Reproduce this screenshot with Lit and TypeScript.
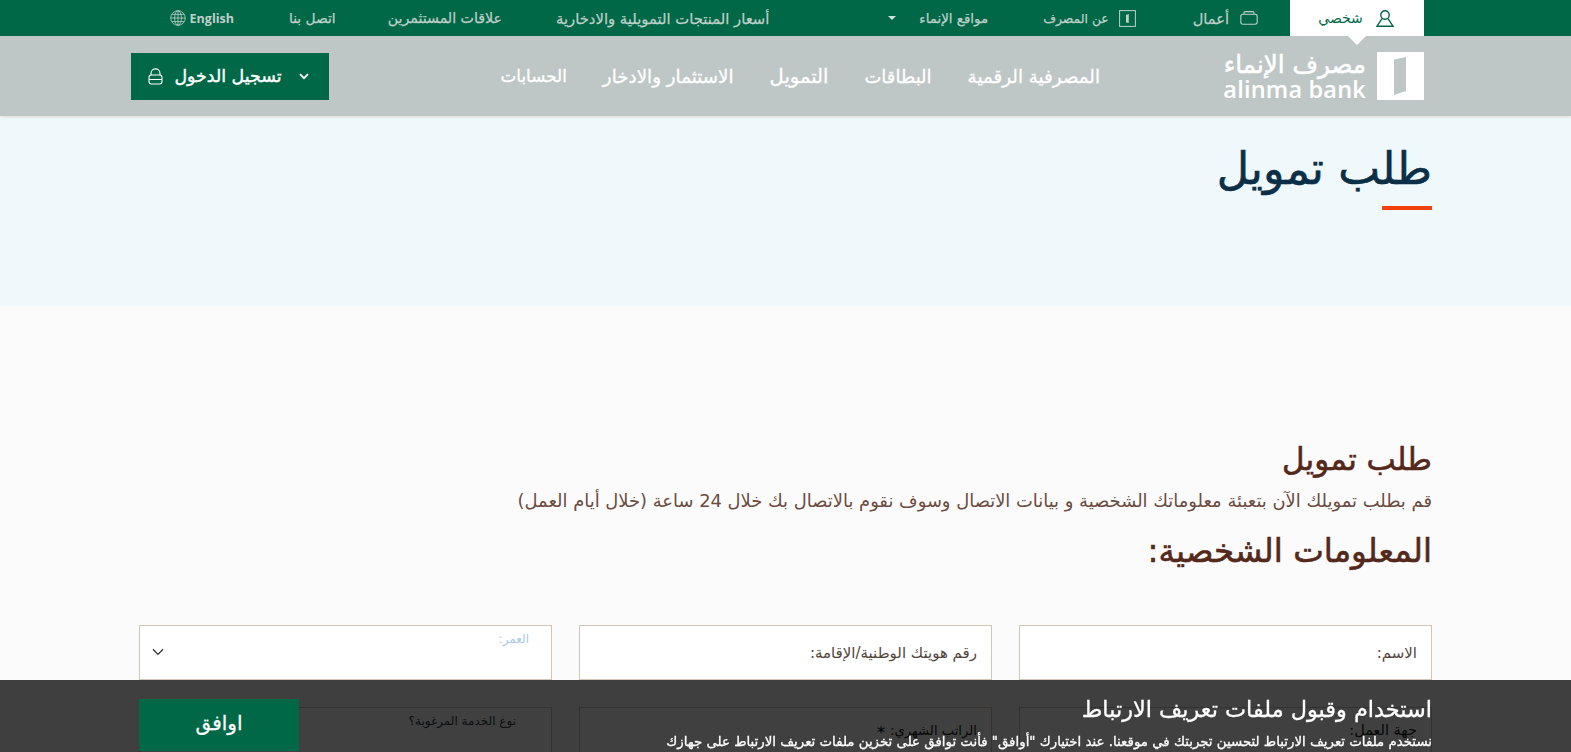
import { LitElement, html, css, svg } from "lit";
import { customElement } from "lit/decorators.js";

const person = svg`<svg class="ic" width="18" height="17" viewBox="0 0 18 17" fill="none" stroke="currentColor" stroke-width="1.4"><circle cx="9" cy="5" r="4.2"/><path d="M6 8.6 1 16.2H17L12 8.6"/></svg>`;
const brief = svg`<svg class="ic" width="18" height="14" viewBox="0 0 18 14" fill="none" stroke="currentColor" stroke-width="1.1"><rect x=".8" y="3.2" width="16.4" height="10" rx="2.2"/><path d="M4 3V1.8C4 1 4.6.6 5.2.6h7.6c.7 0 1.2.5 1.2 1.2V3"/></svg>`;
const door = svg`<svg class="ic" width="17" height="17" viewBox="0 0 17 17"><rect x=".6" y=".6" width="15.8" height="15.8" fill="none" stroke="currentColor" stroke-width="1"/><path d="M7 5 9.8 4V13L7 12.6Z" fill="currentColor"/></svg>`;
const globe = svg`<svg class="ic" width="16" height="16" viewBox="0 0 16 16" fill="none" stroke="currentColor" stroke-width=".8"><circle cx="8" cy="8" r="7.3"/><ellipse cx="8" cy="8" rx="3.4" ry="7.3"/><path d="M8 .7V15.3M.7 8H15.3M1.8 4.4H14.2M1.8 11.6H14.2"/></svg>`;
const lock = svg`<svg class="ic" width="15" height="17" viewBox="0 0 15 17" fill="none" stroke="currentColor" stroke-width="1.1"><rect x="1" y="7" width="13" height="9" rx="2.4"/><path d="M1 11.5H14M3 7V5.4a4.5 4.5 0 0 1 9 0V7"/></svg>`;
const chev = svg`<svg class="ic" width="10" height="7" viewBox="0 0 10 7" fill="none" stroke="currentColor" stroke-width="1.8"><path d="M1 1.2 5 5.2 9 1.2"/></svg>`;
const chevThin = svg`<svg width="12" height="8" viewBox="0 0 12 8" fill="none" stroke="#333" stroke-width="1.3"><path d="M1 1.2 6 6.4 11 1.2"/></svg>`;
const logoDoor = svg`<svg class="ic" width="47" height="48" viewBox="0 0 47 48"><rect width="47" height="48" fill="#fff"/><path d="M17 7.5 29 5V39L17 43Z" fill="#bfc7c6"/></svg>`;

@customElement("app-root")
export class AppRoot extends LitElement {
  static styles = css`
    :host { display: block; height: 100vh; overflow: hidden; background: #fbfbfb; direction: rtl;
      font-family: "DejaVu Sans", sans-serif; color: #54291b; }
    .ic { flex: none; }
    .top { position: relative; z-index: 2; height: 36px; background: #006747; display: flex; align-items: center; padding: 0 147px 0 0; color: #bfd0c9; font-size: 13.5px; -webkit-text-stroke: .25px currentColor; }
    .tab { position: relative; width: 134px; height: 36px; background: #fff; color: #006747; display: flex; align-items: center; justify-content: center; gap: 13px; padding-right: 2px; box-sizing: border-box; margin-left: 32px; font-size: 14px; -webkit-text-stroke: 0; }
    .tab::after { content: ""; position: absolute; bottom: -9px; left: 58px; border: 9px solid transparent; border-bottom: 0; border-top-color: #fff; }
    .ti { display: flex; align-items: center; gap: 11px; margin-left: 55px; white-space: nowrap; }
    .w1 { margin-left: 57px; font-size: 14.6px; }
    .w2 { margin-left: 55px; font-size: 12.4px; gap: 10px; }
    .drop { margin-left: 119px; gap: 0; font-size: 13.4px; }
    .caret { border: 4px solid transparent; border-bottom: 0; border-top: 4px solid #d5e0db; margin-right: 23px; }
    .w3 { margin-left: 54px; font-size: 14.8px; }
    .w4 { margin-left: 52px; font-size: 14.2px; }
    .w5 { margin-left: 55px; font-size: 13.8px; }
    .lang { direction: ltr; gap: 4px; font-family: "Open Sans", sans-serif; font-weight: 700; font-size: 12.5px; margin-left: 0; -webkit-text-stroke: 0; }
    .nav { height: 80px; background: #bfc7c6; display: flex; align-items: center; padding: 0 147px 0 131px; box-shadow: 0 1px 3px rgba(0,0,0,.15); position: relative; }
    .logo { display: flex; align-items: center; gap: 11px; color: #fff; width: 200px; flex: none; }
    .lt { display: flex; flex-direction: column; align-items: flex-start; white-space: nowrap; }
    .la { font-size: 24.6px; line-height: 27px; -webkit-text-stroke: .5px currentColor; }
    .le { font-family: "Open Sans", sans-serif; font-size: 23.5px; line-height: 23px; font-weight: 600; direction: ltr; letter-spacing: .2px; }
    .links { display: flex; align-items: center; gap: 36px; margin-right: 124px; color: #fff; font-size: 18px; white-space: nowrap; -webkit-text-stroke: .3px currentColor; }
    .l1 { font-size: 18.3px; }
    .l3 { font-size: 19.5px; }
    .l4 { font-size: 18.3px; }
    .l5 { font-size: 16.8px; }
    .login { margin-right: auto; width: 198px; height: 47px; background: #006747; color: #fff; display: flex; align-items: center; justify-content: space-between; padding: 0 20px 0 17px; box-sizing: border-box; font-size: 17.4px; white-space: nowrap; -webkit-text-stroke: .4px currentColor; }
    .login .t { margin-right: 6px; }
    .hero { margin-top: 2px; height: 188px; background: #eff8fa; padding: 24px 139px 0; box-sizing: border-box; }
    .hero h1 { margin: 0; font-size: 44.5px; line-height: 54px; font-weight: 400; color: #0a2f47; -webkit-text-stroke: .6px currentColor; }
    .bar { width: 50px; height: 4px; background: #f4400b; margin-top: 10px; }
    .main { padding: 133px 139px 0; }
    h2 { margin: 0; font-size: 31px; line-height: 40px; font-weight: 400; color: #54291b; -webkit-text-stroke: .6px currentColor; }
    h2.b { font-size: 32.5px; }
    p { margin: 9px 0 17px; font-size: 17.9px; line-height: 26px; color: #6b4c3f; }
    .grid { display: grid; grid-template-columns: repeat(3, 1fr); gap: 27px; margin-top: 54px; }
    .f { height: 55px; box-sizing: border-box; background: #fff; border: 1px solid #d3c4b6; position: relative; display: flex; align-items: center; padding: 0 14px; font-size: 15px; color: #54433a; }
    .f.tall { height: 80px; align-items: flex-start; padding-top: 14px; font-size: 14.5px; color: #222; }
    .f.nar { font-size: 13.2px; padding-top: 15px; }
    .f .mini { position: absolute; top: 6px; right: 22px; font-size: 12px; color: #a9c9ea; }
    .f .sel { position: absolute; left: 12px; top: 22px; line-height: 0; }
    .f .q { position: absolute; top: 6px; right: 35px; font-size: 12px; color: #2a3a48; }
    .star { color: #000; margin-right: 5px; font-size: 16px; }
    .cookie { position: fixed; left: 0; right: 0; top: 680px; height: 72px; background: rgba(0,0,0,.75); color: #fff; overflow: hidden; }
    .cookie .in { position: absolute; top: 12px; right: 139px; width: 1293px; }
    .cookie h3 { margin: 0; font-size: 22.4px; line-height: 34px; font-weight: 400; -webkit-text-stroke: .3px currentColor; }
    .cookie .s { margin-top: 7px; font-size: 13.35px; line-height: 18px; white-space: nowrap; -webkit-text-stroke: .3px currentColor; }
    .ok { position: absolute; left: 139px; top: 19px; width: 160px; height: 52px; box-sizing: border-box; padding-bottom: 4px; background: #006747; color: #fff; font-size: 20px; -webkit-text-stroke: .3px currentColor; display: flex; align-items: center; justify-content: center; }
  `;
  render() {
    return html`
      <div class="top">
        <div class="tab">${person}<span>شخصي</span></div>
        <div class="ti w1">${brief}<span>أعمال</span></div>
        <div class="ti w2">${door}<span>عن المصرف</span></div>
        <div class="ti drop"><span>مواقع الإنماء</span><i class="caret"></i></div>
        <div class="ti w3"><span>أسعار المنتجات التمويلية والادخارية</span></div>
        <div class="ti w4"><span>علاقات المستثمرين</span></div>
        <div class="ti w5"><span>اتصل بنا</span></div>
        <div class="ti lang">${globe}<span>English</span></div>
      </div>
      <div class="nav">
        <div class="logo">${logoDoor}<div class="lt"><span class="la">مصرف الإنماء</span><span class="le">alinma bank</span></div></div>
        <div class="links"><span class="l1">المصرفية الرقمية</span><span>البطاقات</span><span class="l3">التمويل</span><span class="l4">الاستثمار والادخار</span><span class="l5">الحسابات</span></div>
        <div class="login">${chev}<span class="t">تسجيل الدخول</span>${lock}</div>
      </div>
      <div class="hero"><h1>طلب تمويل</h1><div class="bar"></div></div>
      <div class="main">
        <h2>طلب تمويل</h2>
        <p>قم بطلب تمويلك الآن بتعبئة معلوماتك الشخصية و بيانات الاتصال وسوف نقوم بالاتصال بك خلال 24 ساعة (خلال أيام العمل)</p>
        <h2 class="b">المعلومات الشخصية:</h2>
        <div class="grid">
          <div class="f">الاسم:</div>
          <div class="f">رقم هويتك الوطنية/الإقامة:</div>
          <div class="f"><span class="mini">العمر:</span><span class="sel">${chevThin}</span></div>
          <div class="f tall">جهة العمل:</div>
          <div class="f tall nar">الراتب الشهري:<span class="star">*</span></div>
          <div class="f tall"><span class="q">نوع الخدمة المرغوبة؟</span></div>
        </div>
      </div>
      <div class="cookie">
        <div class="in">
          <h3>استخدام وقبول ملفات تعريف الارتباط</h3>
          <div class="s">نستخدم ملفات تعريف الارتباط لتحسين تجربتك في موقعنا. عند اختيارك "أوافق" فأنت توافق على تخزين ملفات تعريف الارتباط على جهازك</div>
        </div>
        <div class="ok">اوافق</div>
      </div>
    `;
  }
}
